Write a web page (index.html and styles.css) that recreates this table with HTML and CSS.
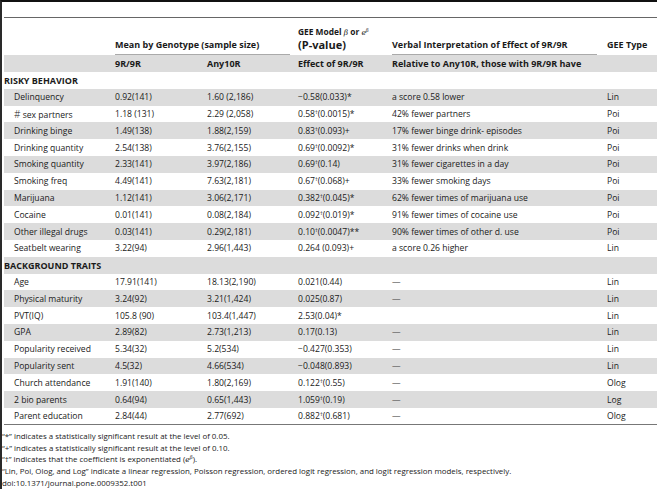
FILE: index.html
```html
<!DOCTYPE html>
<html>
<head>
<meta charset="utf-8">
<link rel="stylesheet" href="styles.css">
</head>
<body>
<div class="page">
  <table class="tbl">
    <colgroup>
      <col class="c1"><col class="c2"><col class="c3"><col class="c4"><col class="c5"><col class="c6">
    </colgroup>
    <thead>
      <tr class="h1">
        <th></th>
        <th colspan="2"><div class="ul ul-mean">Mean by Genotype (sample size)</div></th>
        <th><div class="gee"><div class="gee1">GEE Model <i class="gk">β</i> or <i class="gk">e<sup>β</sup></i></div><div class="gee2">(P-value)</div></div></th>
        <th><div class="ul ul-verb">Verbal Interpretation of Effect of 9R/9R</div></th>
        <th><div class="typ">GEE Type</div></th>
      </tr>
      <tr class="h2 sh">
        <th></th>
        <th>9R/9R</th>
        <th>Any10R</th>
        <th>Effect of 9R/9R</th>
        <th>Relative to Any10R, those with 9R/9R have</th>
        <th></th>
      </tr>
    </thead>
    <tbody>
      <tr class="sec"><td colspan="6">RISKY BEHAVIOR</td></tr>
      <tr class="sh"><td>Delinquency</td><td>0.92(141)</td><td>1.60 (2,186)</td><td>−0.58(0.033)*</td><td>a score 0.58 lower</td><td class="t">Lin</td></tr>
      <tr><td><span class="hash">#</span> sex partners</td><td>1.18 (131)</td><td>2.29 (2,058)</td><td>0.58<sup>†</sup>(0.0015)*</td><td>42% fewer partners</td><td class="t">Poi</td></tr>
      <tr class="sh"><td>Drinking binge</td><td>1.49(138)</td><td>1.88(2,159)</td><td>0.83<sup>†</sup>(0.093)+</td><td>17% fewer binge drink- episodes</td><td class="t">Poi</td></tr>
      <tr><td>Drinking quantity</td><td>2.54(138)</td><td>3.76(2,155)</td><td>0.69<sup>†</sup>(0.0092)*</td><td>31% fewer drinks when drink</td><td class="t">Poi</td></tr>
      <tr class="sh"><td>Smoking quantity</td><td>2.33(141)</td><td>3.97(2,186)</td><td>0.69<sup>†</sup>(0.14)</td><td>31% fewer cigarettes in a day</td><td class="t">Poi</td></tr>
      <tr><td>Smoking freq</td><td>4.49(141)</td><td>7.63(2,181)</td><td>0.67<sup>†</sup>(0.068)+</td><td>33% fewer smoking days</td><td class="t">Poi</td></tr>
      <tr class="sh"><td>Marijuana</td><td>1.12(141)</td><td>3.06(2,171)</td><td>0.382<sup>†</sup>(0.045)*</td><td>62% fewer times of marijuana use</td><td class="t">Poi</td></tr>
      <tr><td>Cocaine</td><td>0.01(141)</td><td>0.08(2,184)</td><td>0.092<sup>†</sup>(0.019)*</td><td>91% fewer times of cocaine use</td><td class="t">Poi</td></tr>
      <tr class="sh"><td>Other illegal drugs</td><td>0.03(141)</td><td>0.29(2,181)</td><td>0.10<sup>†</sup>(0.0047)**</td><td>90% fewer times of other d. use</td><td class="t">Poi</td></tr>
      <tr><td>Seatbelt wearing</td><td>3.22(94)</td><td>2.96(1,443)</td><td>0.264 (0.093)+</td><td>a score 0.26 higher</td><td class="t">Lin</td></tr>
      <tr class="sec sh"><td colspan="6">BACKGROUND TRAITS</td></tr>
      <tr><td>Age</td><td>17.91(141)</td><td>18.13(2,190)</td><td>0.021(0.44)</td><td class="dash">—</td><td class="t">Lin</td></tr>
      <tr class="sh"><td>Physical maturity</td><td>3.24(92)</td><td>3.21(1,424)</td><td>0.025(0.87)</td><td class="dash">—</td><td class="t">Lin</td></tr>
      <tr><td>PVT(IQ)</td><td>105.8 (90)</td><td>103.4(1,447)</td><td>2.53(0.04)*</td><td></td><td class="t">Lin</td></tr>
      <tr class="sh"><td>GPA</td><td>2.89(82)</td><td>2.73(1,213)</td><td>0.17(0.13)</td><td class="dash">—</td><td class="t">Lin</td></tr>
      <tr><td>Popularity received</td><td>5.34(32)</td><td>5.2(534)</td><td>−0.427(0.353)</td><td class="dash">—</td><td class="t">Lin</td></tr>
      <tr class="sh"><td>Popularity sent</td><td>4.5(32)</td><td>4.66(534)</td><td>−0.048(0.893)</td><td class="dash">—</td><td class="t">Lin</td></tr>
      <tr><td>Church attendance</td><td>1.91(140)</td><td>1.80(2,169)</td><td>0.122<sup>†</sup>(0.55)</td><td class="dash">—</td><td class="t">Olog</td></tr>
      <tr class="sh"><td>2 bio parents</td><td>0.64(94)</td><td>0.65(1,443)</td><td>1.059<sup>†</sup>(0.19)</td><td class="dash">—</td><td class="t">Log</td></tr>
      <tr class="last"><td>Parent education</td><td>2.84(44)</td><td>2.77(692)</td><td>0.882<sup>†</sup>(0.681)</td><td class="dash">—</td><td class="t">Olog</td></tr>
    </tbody>
  </table>
  <div class="notes">
    <p>“*” indicates a statistically significant result at the level of 0.05.</p>
    <p>“+” indicates a statistically significant result at the level of 0.10.</p>
    <p>“†” indicates that the coefficient is exponentiated (<i class="gk">e<sup>β</sup></i>).</p>
    <p>“Lin, Poi, Olog, and Log” indicate a linear regression, Poisson regression, ordered logit regression, and logit regression models, respectively.</p>
    <p>doi:10.1371/journal.pone.0009352.t001</p>
  </div>
</div>
</body>
</html>
```
FILE: styles.css
```css
html, body {
  margin: 0;
  padding: 0;
  background: #fff;
}
.page {
  box-sizing: border-box;
  width: 657px;
  height: 489px;
  border-left: 2px solid #2a2a2a;
  border-top: 2px solid #111;
  padding-left: 2px;
  font-family: "Open Sans", "DejaVu Sans", sans-serif;
  color: #1a1a1a;
  overflow: hidden;
}
.tbl {
  margin-top: 15px;
  width: 653px;
  table-layout: fixed;
  border-collapse: collapse;
  border-top: 1px solid #666;
  border-bottom: 1px solid #777;
  font-size: 8.6px;
}
.c1 { width: 111px; }
.c2 { width: 92px; }
.c3 { width: 91px; }
.c4 { width: 94px; }
.c5 { width: 215px; }
.c6 { width: 50px; }
th, td {
  padding: 0;
  text-align: left;
  white-space: nowrap;
  overflow: visible;
}
.h1 th {
  height: 37px;
  vertical-align: bottom;
  font-weight: 700;
  font-size: 9px;
}
.ul {
  border-bottom: 1px solid #aaa;
  padding-bottom: 3px;
}
.gee { padding-bottom: 4px; }
.ul-mean { margin-right: 8px; }
.ul-verb { margin-right: 10px; }
.typ { padding-bottom: 4px; }
.gee1 { font-size: 8.4px; line-height: 11px; }
.gee2 { font-size: 11px; line-height: 13px; }
.gk { font-family: "DejaVu Serif", serif; font-weight: 400; font-size: 7.5px; }
.gk sup { font-size: 5px; vertical-align: 3px; line-height: 0; }
.h2 th {
  height: 17px;
  font-weight: 700;
  font-size: 9px;
  vertical-align: middle;
}
.sh { background: #dcdcdc; }
tbody tr { height: 16.8px; }
tbody td { vertical-align: middle; }
tbody td:first-child { padding-left: 10px; }
tbody tr.sec td { padding-left: 0; font-weight: 700; font-size: 9px; }
td.dash { color: #666; }
sup {
  font-size: 5.5px;
  line-height: 0;
  vertical-align: 3px;
}
.hash { font-size: 10px; font-weight: 300; }
.notes {
  margin-top: 6px;
  margin-left: -2px;
  font-size: 7.9px;
  line-height: 11.6px;
  color: #1a1a1a;
}
.notes p { margin: 0; white-space: nowrap; }
```
